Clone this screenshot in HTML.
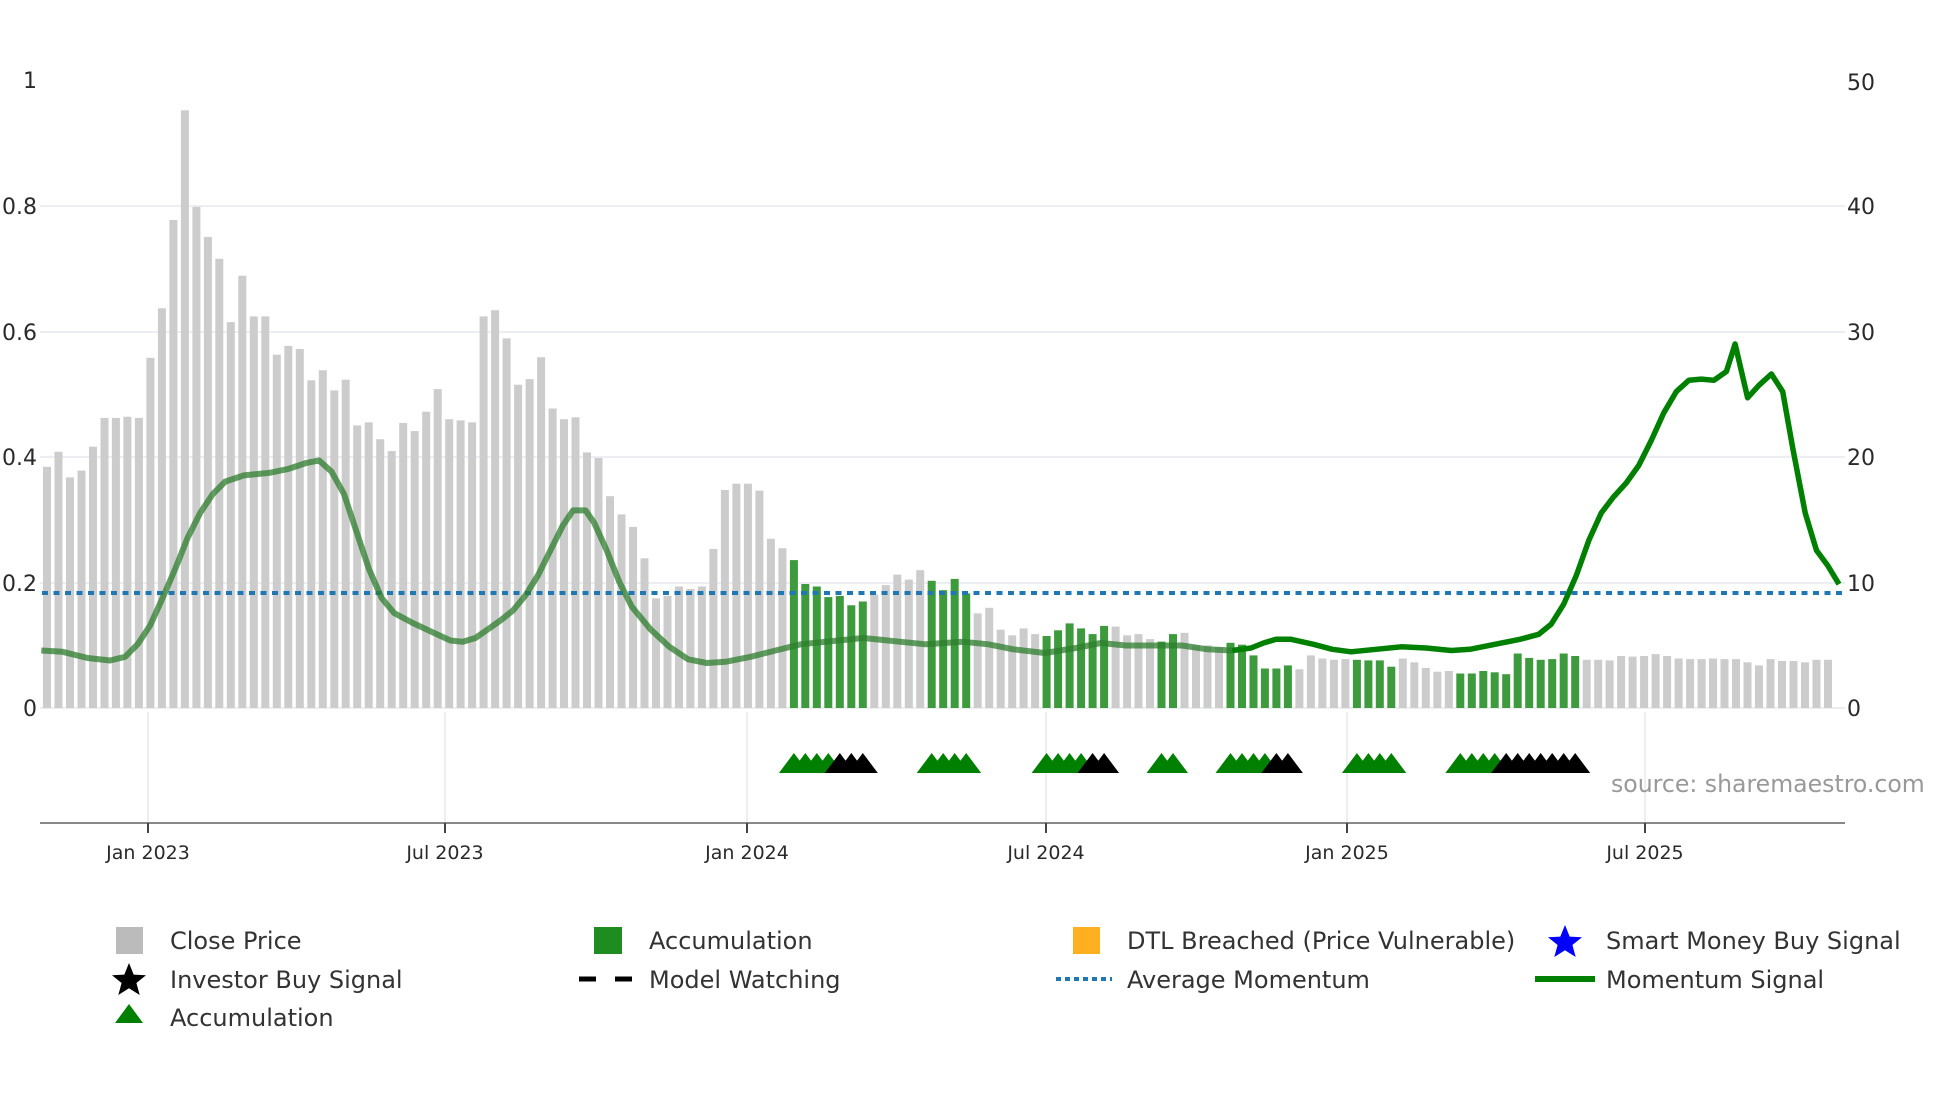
<!DOCTYPE html>
<html><head><meta charset="utf-8">
<style>
html,body{margin:0;padding:0;background:#fff;}
body{width:1960px;height:1102px;overflow:hidden;font-family:"DejaVu Sans","Liberation Sans",sans-serif;}
svg text{font-family:"DejaVu Sans","Liberation Sans",sans-serif;}
</style></head>
<body>
<svg id="c" width="1960" height="1102" viewBox="0 0 1960 1102" xmlns="http://www.w3.org/2000/svg">
<g stroke="#eceef4" stroke-width="2">
<line x1="40" y1="206" x2="1845" y2="206"/>
<line x1="40" y1="332" x2="1845" y2="332"/>
<line x1="40" y1="457" x2="1845" y2="457"/>
<line x1="40" y1="583" x2="1845" y2="583"/>
<line x1="40" y1="708" x2="1845" y2="708"/>
</g>
<g stroke="#eceef0" stroke-width="2">
<line x1="148" y1="712" x2="148" y2="823"/>
<line x1="445" y1="712" x2="445" y2="823"/>
<line x1="747" y1="712" x2="747" y2="823"/>
<line x1="1046" y1="712" x2="1046" y2="823"/>
<line x1="1347" y1="712" x2="1347" y2="823"/>
<line x1="1645" y1="712" x2="1645" y2="823"/>
</g>
<g id="bars"></g>
<line x1="42" y1="593" x2="1845" y2="593" stroke="#1f77b4" stroke-width="4" stroke-dasharray="6,5.5"/>
<g id="lines"></g>
<g id="tris"></g>
<line x1="40" y1="823" x2="1845" y2="823" stroke="#888" stroke-width="2"/>
<g stroke="#444" stroke-width="2">
<line x1="148" y1="823" x2="148" y2="833"/><line x1="445" y1="823" x2="445" y2="833"/>
<line x1="747" y1="823" x2="747" y2="833"/><line x1="1046" y1="823" x2="1046" y2="833"/>
<line x1="1347" y1="823" x2="1347" y2="833"/><line x1="1645" y1="823" x2="1645" y2="833"/>
</g>
<g font-size="22" fill="#2a2a2a" text-anchor="end">
<text x="37" y="88">1</text><text x="37" y="214">0.8</text><text x="37" y="340">0.6</text>
<text x="37" y="465">0.4</text><text x="37" y="591">0.2</text><text x="37" y="716">0</text>
</g>
<g font-size="22" fill="#2a2a2a">
<text x="1847" y="90">50</text><text x="1847" y="214">40</text><text x="1847" y="340">30</text>
<text x="1847" y="465">20</text><text x="1847" y="591">10</text><text x="1847" y="716">0</text>
</g>
<g font-size="19" fill="#2a2a2a" text-anchor="middle">
<text x="148" y="859">Jan 2023</text><text x="445" y="859">Jul 2023</text><text x="747" y="859">Jan 2024</text>
<text x="1046" y="859">Jul 2024</text><text x="1347" y="859">Jan 2025</text><text x="1645" y="859">Jul 2025</text>
</g>
<text x="1611" y="792" font-size="23.6" fill="#999">source: sharemaestro.com</text>
<g font-size="24" fill="#333">
<rect x="116" y="927" width="27" height="27" fill="#bbbbbb"/>
<text x="170" y="949">Close Price</text>
<polygon fill="#000" points="129,963 133.7,974.6 146,975.2 136.4,983 139.7,995 129,988.2 118.3,995 121.6,983 112,975.2 124.3,974.6"/>
<text x="170" y="988">Investor Buy Signal</text>
<polygon fill="#008000" points="129,1004 143,1023 115,1023"/>
<text x="170" y="1026">Accumulation</text>
<rect x="594" y="927" width="28" height="27" fill="#1f8c1f"/>
<text x="649" y="949">Accumulation</text>
<line x1="579" y1="979" x2="632" y2="979" stroke="#000" stroke-width="5" stroke-dasharray="17,19"/>
<text x="649" y="988">Model Watching</text>
<rect x="1073" y="927" width="27" height="27" fill="#ffb020"/>
<text x="1127" y="949">DTL Breached (Price Vulnerable)</text>
<line x1="1056" y1="979" x2="1112" y2="979" stroke="#1f77b4" stroke-width="4" stroke-dasharray="5,4"/>
<text x="1127" y="988">Average Momentum</text>
<polygon fill="#0000ff" points="1565,925 1569.7,936.6 1582,937.2 1572.4,945 1575.7,957 1565,950.2 1554.3,957 1557.6,945 1548,937.2 1560.3,936.6"/>
<text x="1606" y="949">Smart Money Buy Signal</text>
<line x1="1535" y1="979" x2="1595" y2="979" stroke="#008000" stroke-width="6"/>
<text x="1606" y="988">Momentum Signal</text>
</g>
</svg>
<script>
var v=[.385,.409,.368,.379,.417,.463,.463,.465,.463,.559,.638,.779,.954,.8,.752,.717,.616,.69,.625,.625,.564,.578,.573,.523,.539,.507,.524,.451,.456,.429,.41,.455,.442,.473,.509,.461,.459,.456,.625,.635,.59,.516,.525,.56,.478,.461,.464,.408,.399,.338,.309,.289,
.239,.175,.179,.194,.19,.194,.254,.348,.358,.358,.347,.27,.255,.236,.198,.194,.177,.179,.164,.17,.181,.196,.213,.205,.22,.203,.188,.206,.183,.151,.16,.125,.116,.127,.118,.115,.124,.135,.127,.118,.131,.13,.116,.118,.11,.106,.118,.12,.1,.1,.097,.104,.101,.084,.063,.063,.068,.062,.084,.079,.077,
.078,.077,.076,.076,.066,.079,.073,.064,.058,.059,.055,.055,.059,.057,.054,.087,.08,.077,.078,.087,.083,.077,.077,.076,.083,.082,.083,.086,.083,.079,.078,.078,.079,.078,.078,.073,.068,.078,.075,.075,.073,.077,.077];
var green=[[66,72],[78,81],[88,93],[98,99],[104,109],[115,118],[124,134]];
var blackStart={70:1,71:1,72:1,92:1,93:1,108:1,109:1};
for(var i=128;i<=134;i++)blackStart[i]=1;
function isG(i){for(var k=0;k<green.length;k++)if(i>=green[k][0]&&i<=green[k][1])return true;return false;}
var s="";
function cx(i){return 47+(i-1)*11.49;}
for(var i=1;i<=v.length;i++){var h=v[i-1]*626.5;s+='<rect x="'+(cx(i)-4).toFixed(1)+'" y="'+(708-h).toFixed(1)+'" width="8" height="'+h.toFixed(1)+'" fill="'+(isG(i)?'#3d9b3d':'#cccccc')+'"/>';}
document.getElementById('bars').innerHTML=s;
var t="";var gl=[],bl=[];
for(var k=0;k<green.length;k++)for(var i=green[k][0];i<=green[k][1];i++){(blackStart[i]?bl:gl).push(i);}
gl.concat(bl).forEach(function(i){var c=cx(i);t+='<polygon points="'+(c-15).toFixed(1)+',773 '+c.toFixed(1)+',753 '+(c+15).toFixed(1)+',773" fill="'+(blackStart[i]?'#000':'#008000')+'"/>';});
document.getElementById('tris').innerHTML=t;
var p=[[33,520],[50,521],[70,526],[88,528],[100,525],[110,515],[120,500],[130,478],[140,455],[150,430],[160,410],[170,395],[180,385],[195,380],[215,378],[230,375],[245,370],[255,368],[265,377],[275,395],[285,425],[295,455],[305,478],[315,490],[330,498],[345,505],[360,512],[370,513],[380,510],[390,503],[400,496],[410,488],[420,476],[430,460],[440,440],[450,420],[458,408],[468,408],[475,418],[485,440],[495,465],[505,485],[520,503],[535,517],[550,527],[565,530],[580,529],[600,525],[620,520],[640,515],[670,512],[690,510],[710,512],[740,515],[770,513],[790,515],[810,519],[835,522],[860,518],[880,514],[900,516],[920,516],[945,516],[965,519],[985,520],[1000,518],[1010,514],[1020,511],[1032,511],[1050,515],[1065,519],[1080,521],[1100,519],[1120,517],[1140,518],[1160,520],[1175,519],[1195,515],[1215,511],[1230,507],[1240,499],[1250,483],[1260,460],[1270,432],[1280,410],[1290,397],[1300,386],[1310,372],[1320,352],[1330,330],[1340,313],[1350,304],[1360,303],[1370,304],[1380,297],[1387,275],[1397,318],[1406,308],[1416,299],[1425,313],[1433,358],[1443,410],[1452,440],[1461,452],[1470,467]];
var a=[],b=[];p.forEach(function(q){var pt=(q[0]*1.251).toFixed(1)+','+(q[1]*1.251).toFixed(1);if(q[0]<=985)a.push(pt);if(q[0]>=985)b.push(pt);});
document.getElementById('lines').innerHTML='<polyline points="'+a.join(' ')+'" fill="none" stroke="#2e7d2e" stroke-opacity="0.75" stroke-width="6" stroke-linejoin="round"/><polyline points="'+b.join(' ')+'" fill="none" stroke="#008000" stroke-width="5.5" stroke-linejoin="round"/>';
</script>
</body></html>
